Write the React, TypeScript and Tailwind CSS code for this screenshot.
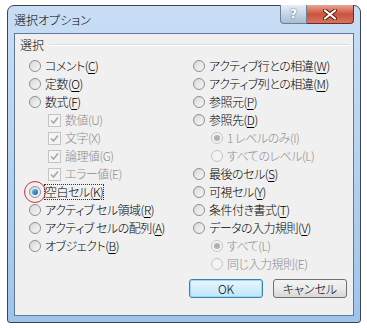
import React from "react";

const font = { fontFamily: '"Noto Sans CJK JP", "Noto Sans", sans-serif' };

function Radio({ checked = false, disabled = false }: { checked?: boolean; disabled?: boolean }) {
  return (
    <span
      className={
        "relative inline-block w-[12px] h-[12px] rounded-full border shrink-0 " +
        (disabled
          ? "border-[#c4c4c4] bg-[#f4f4f4]"
          : "border-[#8e8f8f] bg-gradient-to-br from-[#d8d8d8] to-[#f8f8f8]")
      }
    >
      {checked && (
        <span
          className={
            "absolute left-[2px] top-[2px] w-[6px] h-[6px] rounded-full " +
            (disabled ? "bg-[#b0b0b0]" : "bg-gradient-to-br from-[#6fc3f4] to-[#0b5da8]")
          }
        />
      )}
    </span>
  );
}

function Check() {
  return (
    <span className="relative inline-flex items-center justify-center w-[13px] h-[13px] border border-[#c4c4c4] bg-[#f4f4f4] shrink-0">
      <svg width="9" height="9" viewBox="0 0 9 9">
        <path d="M1 4.5 L3.5 7 L8 1.5" fill="none" stroke="#a8a8a8" strokeWidth="1.6" />
      </svg>
    </span>
  );
}

function Label({ text, k, tail = "" }: { text: string; k: string; tail?: string }) {
  return (
    <span>
      {text}(<span className="underline underline-offset-2">{k}</span>){tail}
    </span>
  );
}

function Row({
  children,
  indent = 0,
}: {
  children: React.ReactNode;
  indent?: number;
}) {
  return (
    <div className="h-[18px] flex items-center gap-[4px]" style={{ paddingLeft: indent }}>
      {children}
    </div>
  );
}

export default function App() {
  return (
    <div
      className="w-[367px] h-[328px] bg-white relative overflow-hidden text-[12px] text-black font-light [font-feature-settings:'palt']"
      style={font}
    >
      <div className="ml-[7px] mt-[5px] w-[354px] h-[318px] border border-[#3c4653] rounded-t-[7px] rounded-b-[3px] bg-gradient-to-b from-[#c9def5] via-[#b4d2f1] to-[#9ec4ec] px-[6px] pb-[6px] flex flex-col">
        {/* Title bar */}
        <div className="h-[27px] flex items-start relative">
          <span className="mt-[6px] text-[12px] leading-[16px] text-black">選択オプション</span>
          <div className="absolute right-[0px] top-[-1px] flex">
            <div
              className="w-[27px] h-[19px] rounded-bl-[4px] border border-[#6d7f94] border-t-0 bg-gradient-to-b from-[#e6eef7] to-[#a9bdd4] flex items-center justify-center text-white font-bold text-[12px] leading-none"
              style={{ fontFamily: '"DejaVu Sans", sans-serif', textShadow: "0 0 2px #3b4a5c" }}
            >
              ?
            </div>
            <div className="w-[47px] h-[19px] rounded-br-[4px] border border-[#6e2b22] border-t-0 border-l-0 bg-gradient-to-b from-[#e8a493] via-[#c9543e] to-[#d7735c] flex items-center justify-center">
              <svg width="14" height="11" viewBox="0 0 14 11">
                <path d="M2 1.5 L12 9.5 M12 1.5 L2 9.5" stroke="#5a1a12" strokeWidth="4" strokeLinecap="round" />
                <path d="M2 1.5 L12 9.5 M12 1.5 L2 9.5" stroke="#ffffff" strokeWidth="2.2" strokeLinecap="round" />
              </svg>
            </div>
          </div>
        </div>
        {/* Client */}
        <div className="flex-1 border border-[#5f7a99] bg-[#f0f0f0] flex flex-col">
          <div className="flex items-center mt-[3px] ml-[5px] mr-[4px] h-[16px]">
            <span>選択</span>
            <span className="flex-1 ml-[5px] h-[2px] border-t border-[#d5dfe5] border-b border-b-white" />
          </div>
          <div className="flex mt-[4px] tracking-[-0.5px]">
            <div className="w-[178px] pl-[14px] flex flex-col">
              <Row><Radio /><Label text="コメント" k="C" /></Row>
              <Row><Radio /><Label text="定数" k="O" /></Row>
              <Row><Radio /><Label text="数式" k="F" /></Row>
              <div className="text-[#8d8d8d] flex flex-col">
                <Row indent={19}><Check /><span>数値(U)</span></Row>
                <Row indent={19}><Check /><span>文字(X)</span></Row>
                <Row indent={19}><Check /><span>論理値(G)</span></Row>
                <Row indent={19}><Check /><span>エラー値(E)</span></Row>
              </div>
              <Row>
                <span className="relative inline-flex">
                  <Radio checked />
                  <span className="absolute left-[-5px] top-[-5px] w-[22px] h-[22px] rounded-full border-[1.5px] border-[#d0343a]" />
                </span>
                <span className="outline outline-1 outline-dotted outline-[#333] leading-[14px]">
                  <Label text="空白セル" k="K" />
                </span>
              </Row>
              <Row><Radio /><Label text="アクティブ セル領域" k="R" /></Row>
              <Row><Radio /><Label text="アクティブ セルの配列" k="A" /></Row>
              <Row><Radio /><Label text="オブジェクト" k="B" /></Row>
            </div>
            <div className="flex-1 flex flex-col">
              <Row><Radio /><Label text="アクティブ行との相違" k="W" /></Row>
              <Row><Radio /><Label text="アクティブ列との相違" k="M" /></Row>
              <Row><Radio /><Label text="参照元" k="P" /></Row>
              <Row><Radio /><Label text="参照先" k="D" /></Row>
              <div className="text-[#8d8d8d] flex flex-col">
                <Row indent={18}><Radio checked disabled /><span>1 レベルのみ(I)</span></Row>
                <Row indent={18}><Radio disabled /><span>すべてのレベル(L)</span></Row>
              </div>
              <Row><Radio /><Label text="最後のセル" k="S" /></Row>
              <Row><Radio /><Label text="可視セル" k="Y" /></Row>
              <Row><Radio /><Label text="条件付き書式" k="T" /></Row>
              <Row><Radio /><Label text="データの入力規則" k="V" /></Row>
              <div className="text-[#8d8d8d] flex flex-col">
                <Row indent={18}><Radio checked disabled /><span>すべて(L)</span></Row>
                <Row indent={18}><Radio disabled /><span>同じ入力規則(E)</span></Row>
              </div>
            </div>
          </div>
          <div className="flex justify-end gap-[10px] mr-[6px] mt-[6px]">
            <button
              className="w-[74px] h-[19px] rounded-[3px] border border-[#3c7fb1] bg-gradient-to-b from-[#eaf6fd] to-[#bee6fd] text-[12px] leading-none shadow-[inset_0_0_0_1px_#9fd5f5]"
              style={font}
            >
              OK
            </button>
            <button
              className="w-[74px] h-[19px] rounded-[3px] border border-[#707070] bg-gradient-to-b from-[#f2f2f2] via-[#ebebeb] to-[#d6d6d6] text-[12px] leading-none"
              style={font}
            >
              キャンセル
            </button>
          </div>
        </div>
      </div>
    </div>
  );
}
